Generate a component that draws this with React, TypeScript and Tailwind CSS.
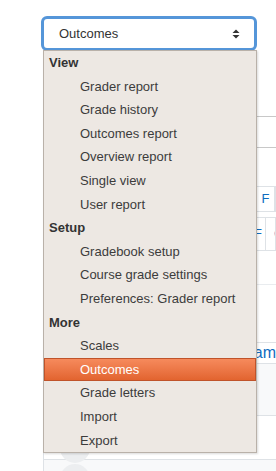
import React from 'react'

type Row = { label: string; header?: boolean; selected?: boolean }

const rows: Row[] = [
  { label: 'View', header: true },
  { label: 'Grader report' },
  { label: 'Grade history' },
  { label: 'Outcomes report' },
  { label: 'Overview report' },
  { label: 'Single view' },
  { label: 'User report' },
  { label: 'Setup', header: true },
  { label: 'Gradebook setup' },
  { label: 'Course grade settings' },
  { label: 'Preferences: Grader report' },
  { label: 'More', header: true },
  { label: 'Scales' },
  { label: 'Outcomes', selected: true },
  { label: 'Grade letters' },
  { label: 'Import' },
  { label: 'Export' },
]

const SortArrows = () => (
  <svg width="8" height="10" viewBox="0 0 8 10" className="text-[#333]">
    <path d="M4 0.5 L7.5 4 L0.5 4 Z" fill="currentColor" />
    <path d="M4 9.5 L7.5 6 L0.5 6 Z" fill="currentColor" />
  </svg>
)

const App = () => {
  return (
    <div
      className="relative w-[276px] h-[471px] overflow-hidden bg-white text-[13px]"
      style={{ fontFamily: '"Liberation Sans", Arial, sans-serif' }}
    >
      {/* select box */}
      <div className="pt-[16px] pl-[41px]">
        <div className="w-[216px] h-[35px] rounded-[6px] border-[3px] border-[#5596d9] bg-white flex items-center justify-between pl-[15px] pr-[14px] text-[#333]">
          <span>Outcomes</span>
          <SortArrows />
        </div>
      </div>

      {/* page content behind the menu */}
      <div className="ml-[43px] border-l border-[#dee2e6]">
        <div className="h-[66px] border-b border-[#c8c8c8]" />
        <div className="h-[31px] border-b border-[#c8c8c8]" />
        <div className="h-[38px]" />
        <div className="flex h-[26px]">
          <div className="w-[212px]" />
          <div className="w-[19px] border border-[#dee2e6] flex items-center justify-center text-[#0f6cbf]">F</div>
          <div className="flex-1 border-y border-r border-[#dee2e6]" />
        </div>
        <div className="h-[5px]" />
        <div className="flex h-[34px] border-y border-[#dee2e6]">
          <div className="w-[212px]" />
          <div className="w-[10px] border-x border-[#dee2e6] text-[#0f6cbf] flex items-center overflow-hidden">
            <span className="-ml-[3px]">F</span>
          </div>
          <div className="flex-1 border-r border-[#dee2e6] text-[#0f6cbf] flex items-center pl-[6px] overflow-hidden">
            <span className="ml-[2px]">C</span>
          </div>
        </div>
        <div className="h-[34px] border-b border-[#e9ecef]" />
        <div className="h-[57px]" />
        <div className="flex h-[22px] border-y border-[#dee2e6] bg-white items-center">
          <div className="w-[213px]" />
          <span className="text-[#0f6cbf] text-[16px]">am</span>
        </div>
        <div className="h-[52px] bg-[#f8f9fa] border-b border-[#dee2e6]" />
        <div className="h-[43px] pl-[16px] flex items-end">
          <div className="w-[30px] h-[30px] rounded-full bg-[#eceef0] -mb-[4px]" />
        </div>
        <div className="h-[30px] bg-[#f8f9fa] border-t border-[#dee2e6] pl-[16px] pt-[4px]">
          <div className="w-[30px] h-[30px] rounded-full bg-[#eceef0]" />
        </div>
      </div>

      {/* open dropdown list */}
      <div className="absolute left-[43px] top-[50px] w-[214px] border border-[#b9b1a9] bg-[#ede8e3] shadow-[1px_1px_2px_rgba(0,0,0,0.15)]">
        {rows.map((row) =>
          row.header ? (
            <div key={row.label} className="h-[23.6px] flex items-center pl-[5px] font-bold text-[#333]">
              {row.label}
            </div>
          ) : row.selected ? (
            <div
              key={row.label}
              className="h-[23.6px] flex items-center pl-[35px] text-white border border-[#c0532a] bg-gradient-to-b from-[#f68a5c] to-[#e2642f]"
            >
              {row.label}
            </div>
          ) : (
            <div key={row.label} className="h-[23.6px] flex items-center pl-[36px] text-[#3c3c3c]">
              {row.label}
            </div>
          )
        )}
      </div>
    </div>
  )
}

export default App
